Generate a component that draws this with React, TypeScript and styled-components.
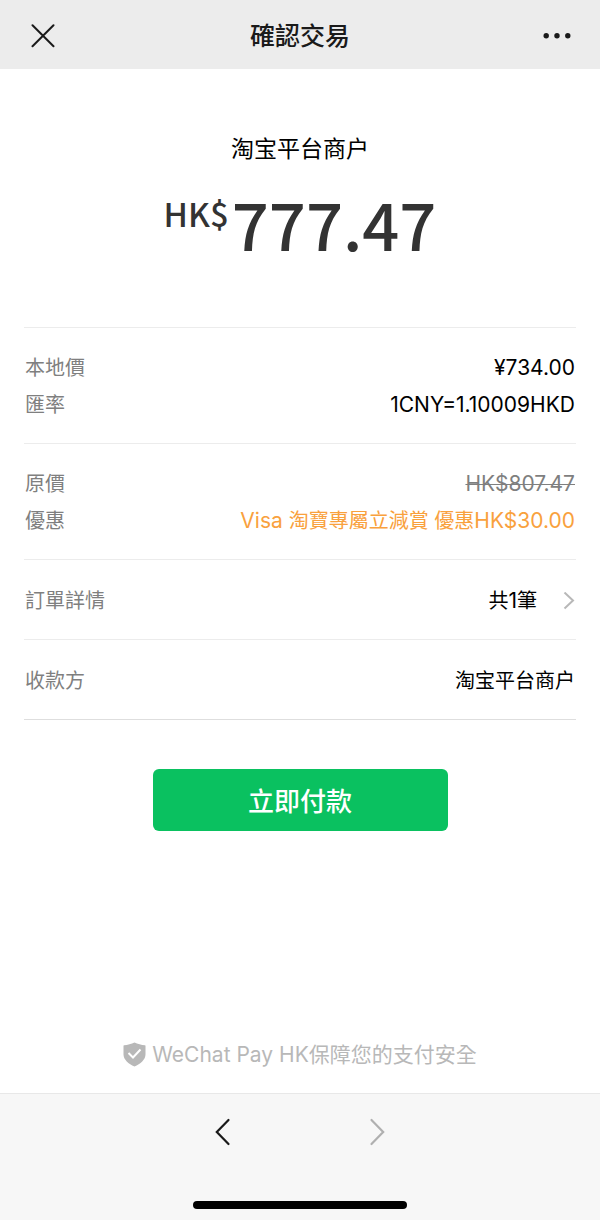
import React from 'react';
import styled, { createGlobalStyle, css } from 'styled-components';

const GlobalStyle = createGlobalStyle`
  *, *::before, *::after {
    box-sizing: border-box;
  }
  body {
    margin: 0;
    background: #fff;
    color: #000;
    font-family: Inter, 'Noto Sans CJK TC', sans-serif;
    font-size: 20px;
  }
`;

const Page = styled.div`
  display: flex;
  flex-direction: column;
  min-height: 100vh;
`;

const iconButton = css`
  display: flex;
  align-items: center;
  justify-content: center;
  width: 40px;
  height: 40px;
  padding: 0;
  border: 0;
  background: none;
  cursor: pointer;
`;

const IconButton = styled.button<{ $tone?: string }>`
  ${iconButton}
  color: ${({ $tone }) => $tone ?? '#1a1a1a'};
`;

const Header = styled.header`
  display: flex;
  align-items: center;
  justify-content: space-between;
  padding: 16px 23px 13px;
  background: #ececec;
`;

const Title = styled.h1`
  margin: 0;
  color: #1a1a1a;
  font-size: 25px;
  font-weight: 500;
  line-height: 40px;
`;

const Main = styled.main`
  display: flex;
  flex: 1;
  flex-direction: column;
  padding: 0 24px 22px;
`;

const Summary = styled.section`
  display: flex;
  flex-direction: column;
  align-items: center;
  gap: 17px;
  padding: 64px 0 63px;
`;

const Merchant = styled.p`
  margin: 0;
  font-family: Inter, 'Noto Sans CJK SC', sans-serif;
  font-size: 23px;
  line-height: 32px;
`;

const Amount = styled.p`
  display: flex;
  align-items: flex-start;
  gap: 3px;
  margin: 0;
  color: #333;
  font-family: 'Noto Sans CJK SC', sans-serif;
  font-weight: 500;
`;

const Currency = styled.span`
  font-size: 33px;
  line-height: 62px;
`;

const Figure = styled.span`
  font-size: 65px;
  line-height: 82px;
`;

const Details = styled.dl`
  margin: 0;
  border-bottom: 1px solid #dedede;
`;

const Group = styled.div<{ $single?: boolean }>`
  display: flex;
  flex-direction: column;
  gap: 1px;
  padding: ${({ $single }) => ($single ? '23px 1px 20px' : '22px 1px 20px')};
  border-top: 1px solid #ececec;
`;

const Row = styled.div`
  display: flex;
  justify-content: space-between;
  height: 36px;
  line-height: 36px;
`;

const Label = styled.dt`
  color: #7f7f7f;
`;

const Value = styled.dd<{ $tone?: string; $simplified?: boolean }>`
  margin: 0;
  color: ${({ $tone }) => $tone ?? '#000'};
  ${({ $simplified }) =>
    $simplified && "font-family: Inter, 'Noto Sans CJK SC', sans-serif;"}
`;

const Latin = styled.span`
  font-size: 21px;
`;

const OriginalPrice = styled.s`
  font-size: 21px;
  text-decoration-thickness: 1px;
`;

const OrderLink = styled.a`
  display: flex;
  align-items: center;
  gap: 25px;
  color: inherit;
  text-decoration: none;
`;

const PayButton = styled.button`
  align-self: center;
  width: 295px;
  max-width: 100%;
  height: 62px;
  margin-top: 49px;
  padding: 3px 0 0;
  border: 0;
  border-radius: 6px;
  background: #0ac160;
  color: #fff;
  font-family: inherit;
  font-size: 26px;
  font-weight: 500;
  line-height: 36px;
  cursor: pointer;
`;

const Assurance = styled.p`
  display: flex;
  align-items: center;
  justify-content: center;
  gap: 6px;
  margin: auto 0 0;
  color: #b8b8b8;
  font-size: 21px;
  line-height: 32px;
`;

const BottomBar = styled.footer`
  display: flex;
  flex-direction: column;
  align-items: center;
  justify-content: space-between;
  height: 127px;
  padding: 18px 0 11px;
  border-top: 1px solid #e8e8e8;
  background: #f7f7f7;
`;

const HistoryNav = styled.nav`
  display: flex;
  gap: 114px;
`;

const HomeIndicator = styled.div`
  width: 214px;
  height: 8px;
  border-radius: 4px;
  background: #000;
`;

const CloseIcon = () => (
  <svg width="24" height="24" viewBox="0 0 24 24" fill="none" stroke="currentColor" strokeWidth="2" strokeLinecap="round">
    <path d="M1.5 1.2l21 21M22.5 1.2l-21 21" />
  </svg>
);

const MoreIcon = () => (
  <svg width="28" height="6" viewBox="0 0 28 6" fill="currentColor">
    <circle cx="3.2" cy="2.8" r="2.7" />
    <circle cx="14" cy="2.8" r="2.7" />
    <circle cx="24.8" cy="2.8" r="2.7" />
  </svg>
);

const BackIcon = () => (
  <svg width="16" height="28" viewBox="0 0 16 28" fill="none" stroke="currentColor" strokeWidth="2.2" strokeLinecap="round">
    <path d="M13.500 2L1.800 14 13.500 26" />
  </svg>
);

const ForwardIcon = () => (
  <svg width="16" height="28" viewBox="0 0 16 28" fill="none" stroke="currentColor" strokeWidth="2.2" strokeLinecap="round">
    <path d="M2.500 2L14.200 14 2.500 26" />
  </svg>
);

const DisclosureIcon = () => (
  <svg width="13" height="18" viewBox="0 0 13 18" fill="none" stroke="#b8b8b8" strokeWidth="2">
    <path d="M2.500 0.500l8.500 8-8.500 8" />
  </svg>
);

const ShieldIcon = () => (
  <svg width="23" height="27" viewBox="0 0 23 27" fill="none">
    <path
      d="M11.500 0.500C14.500 2 18.500 3 22 3.200Q22.500 3.300 22.500 4V12.500C22.500 17.500 17.500 22 11.500 24.500C5.500 22 0.500 17.500 0.500 12.500V4Q0.500 3.300 1 3.200C4.500 3 8.500 2 11.500 0.500Z"
      fill="#b8b8b8"
    />
    <path d="M5.500 11l4.500 4.500 7.500-8" stroke="#fff" strokeWidth="2" />
  </svg>
);

export default function App() {
  return (
    <Page>
      <GlobalStyle />
      <Header>
        <IconButton type="button" aria-label="關閉">
          <CloseIcon />
        </IconButton>
        <Title lang="zh-Hant">確認交易</Title>
        <IconButton type="button" aria-label="更多">
          <MoreIcon />
        </IconButton>
      </Header>

      <Main>
        <Summary>
          <Merchant lang="zh-Hans">淘宝平台商户</Merchant>
          <Amount>
            <Currency>HK$</Currency>
            <Figure>777.47</Figure>
          </Amount>
        </Summary>

        <Details lang="zh-Hant">
          <Group>
            <Row>
              <Label>本地價</Label>
              <Value>
                <Latin>¥734.00</Latin>
              </Value>
            </Row>
            <Row>
              <Label>匯率</Label>
              <Value>
                <Latin>1CNY=1.10009HKD</Latin>
              </Value>
            </Row>
          </Group>
          <Group>
            <Row>
              <Label>原價</Label>
              <Value $tone="#7f7f7f">
                <OriginalPrice>HK$807.47</OriginalPrice>
              </Value>
            </Row>
            <Row>
              <Label>優惠</Label>
              <Value $tone="#f9a13d">
                <Latin>Visa </Latin>淘寶專屬立減賞 優惠<Latin>HK$30.00</Latin>
              </Value>
            </Row>
          </Group>
          <Group $single>
            <Row>
              <Label>訂單詳情</Label>
              <Value>
                <OrderLink href="#order">
                  <span>
                    共<Latin>1</Latin>筆
                  </span>
                  <DisclosureIcon />
                </OrderLink>
              </Value>
            </Row>
          </Group>
          <Group $single>
            <Row>
              <Label>收款方</Label>
              <Value $simplified lang="zh-Hans">淘宝平台商户</Value>
            </Row>
          </Group>
        </Details>

        <PayButton type="button">立即付款</PayButton>

        <Assurance lang="zh-Hant">
          <ShieldIcon />
          WeChat Pay HK保障您的支付安全
        </Assurance>
      </Main>

      <BottomBar>
        <HistoryNav aria-label="瀏覽">
          <IconButton type="button" aria-label="返回">
            <BackIcon />
          </IconButton>
          <IconButton type="button" aria-label="前進" $tone="#b0b0b0">
            <ForwardIcon />
          </IconButton>
        </HistoryNav>
        <HomeIndicator />
      </BottomBar>
    </Page>
  );
}
